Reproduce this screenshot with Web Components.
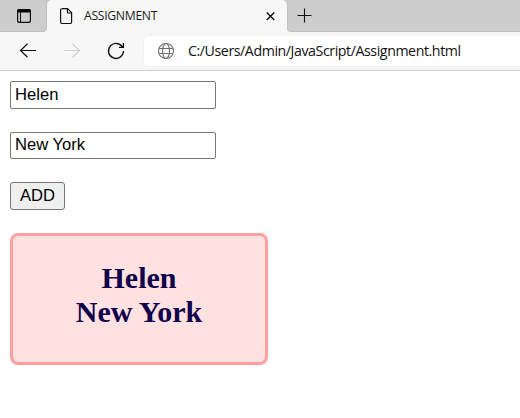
<!DOCTYPE html>
<html lang="en">
<head>
<meta charset="utf-8">
<title>ASSIGNMENT</title>
<style>
html,body{margin:0;background:#fff;height:100%;overflow:hidden}
</style>
</head>
<body>
<browser-window>
  <tab-strip slot="chrome"><browser-tab>ASSIGNMENT</browser-tab></tab-strip>
  <nav-bar slot="chrome"><address-field>C:/Users/Admin/JavaScript/Assignment.html</address-field></nav-bar>
  <text-field style="--h:28px;--lh:26px">Helen</text-field>
  <text-field style="--h:27px;--lh:24px">New York</text-field>
  <push-button>ADD</push-button>
  <result-card><div>Helen</div><div>New York</div></result-card>
</browser-window>
<script>
function define(name, html) {
  customElements.define(name, class extends HTMLElement {
    constructor() {
      super();
      this.attachShadow({mode: 'open'}).innerHTML = html;
    }
  });
}

define('browser-window', `
<style>
:host{display:flex;flex-direction:column;width:520px;height:418px;background:#fff}
main{display:flex;flex-direction:column;align-items:flex-start;gap:23px;padding:10px}
</style>
<slot name="chrome"></slot><main><slot></slot></main>`);

define('tab-strip', `
<style>
:host{display:flex;height:32px;background:#f7f7f7}
.side{background:#cdcdcd;box-sizing:border-box;border-bottom:1px solid #c0c0c0}
.left{width:47px;border-right:1px solid #c2c2c2;border-radius:0 0 4px 0}
.right{flex:1;border-left:1px solid #c2c2c2;border-radius:0 0 0 4px}
.mid{background:linear-gradient(#cdcdcd 0 8px,#f7f7f7 8px)}
svg{display:block}
</style>
<div class="side left"><svg width="46" height="31" fill="none" stroke="#111"><rect x="17.6" y="9.6" width="12.8" height="12.8" rx="2" stroke-width="1.2"/><path d="M17 12.5V11a2 2 0 0 1 2-2h10a2 2 0 0 1 2 2v1.5z" fill="#000" stroke="none"/><path d="M20.5 12v10" stroke-width="1"/></svg></div>
<div class="mid"><slot></slot></div>
<div class="side right"><svg width="40" height="31" stroke="#111" stroke-width="1.1"><path d="M9.500 15.500h14M16.500 8.500v14"/></svg></div>`);

define('browser-tab', `
<style>
:host{display:flex;align-items:center;width:240px;height:32px;box-sizing:border-box;background:#f7f7f7;border-radius:5px 5px 0 0;font:12.2px/16px "Open Sans","Noto Sans",sans-serif;color:#1b1b1b}
svg{flex:none;display:block}
.t{width:171px;letter-spacing:-.3px;white-space:nowrap}
</style>
<svg width="37" height="32" fill="none" stroke="#111" stroke-width="1.2"><path d="M15 8.600h5.500l4.100 4.100v9.300a1.500 1.500 0 0 1-1.500 1.500h-8a1.500 1.500 0 0 1-1.500-1.500V10.100a1.500 1.500 0 0 1 1.500-1.500z"/><path d="M20.400 9v3a1 1 0 0 0 1 1h3"/></svg>
<span class="t"><slot></slot></span>
<svg width="32" height="32" fill="none" stroke="#111" stroke-width="1.4"><path d="M11.700 12.500l7.600 7.600M19.300 12.500l-7.600 7.600"/></svg>`);

define('nav-bar', `
<style>
:host{display:flex;height:39px;box-sizing:border-box;background:#f7f7f7;border-bottom:1px solid #cecece}
svg{flex:none;display:block}
::slotted(*){flex:1}
</style>
<svg width="144" height="38" fill="none" stroke="#111" stroke-width="1.2"><path d="M36 18.500H20.500M27.500 11.800l-7 6.700 7 6.700"/><path d="M64 18.500h15.500M72.500 11.800l7 6.700-7 6.700" stroke="#cecece"/><path d="M122.600 15.400a7.500 7.500 0 1 0 .9 3.600M123.400 11v4.400h-4.500" stroke-width="1.300"/></svg>
<slot></slot>`);

define('address-field', `
<style>
:host{display:flex;align-items:center;height:30px;margin-top:4px;background:#fff;border-radius:4px 0 0 4px;box-shadow:0 0 2px #e4e4e4;font:14.2px/20px "Open Sans","Noto Sans",sans-serif;color:#111}
svg{flex:none;display:block}
span{white-space:nowrap;letter-spacing:-.425px}
</style>
<svg width="44" height="30" fill="none" stroke="#6c6c6c" stroke-width="1.1"><circle cx="22" cy="15" r="7.500"/><ellipse cx="22" cy="15" rx="3.500" ry="7.500"/><path d="M15.300 12.500h13.400M15.300 17.500h13.400"/></svg>
<span><slot></slot></span>`);

define('text-field', `
<style>
:host{display:block;box-sizing:border-box;width:206px;height:var(--h);border:1px solid #767676;border-radius:2px;background:#fff;padding-left:4px;font:16.6px/var(--lh) "Liberation Sans",Arial,sans-serif;color:#000}
</style><slot></slot>`);

define('push-button', `
<style>
button{display:block;box-sizing:border-box;width:55px;height:28px;border:1px solid #767676;border-radius:3px;background:#efefef;padding:0 0 1px;font:16.6px/25px "Liberation Sans",Arial,sans-serif;color:#000}
</style><button><slot></slot></button>`);

define('result-card', `
<style>
:host{display:block;box-sizing:border-box;width:258px;height:132px;border:3px solid #ff9f9f;border-radius:8px;background:#ffe1e1;padding-top:25px;text-align:center;font:bold 30px/34px "Liberation Serif","Times New Roman",serif;color:#10004c}
</style><slot></slot>`);
</script>
</body>
</html>
